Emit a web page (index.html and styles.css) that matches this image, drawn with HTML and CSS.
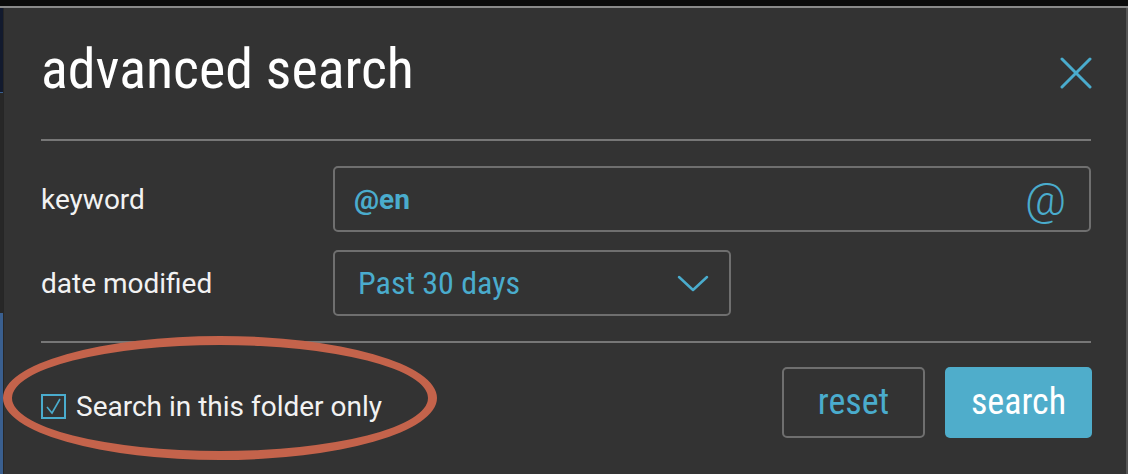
FILE: index.html
```html
<!DOCTYPE html>
<html lang="en">
<head>
  <meta charset="UTF-8">
  <title>advanced search</title>
  <link rel="stylesheet" href="styles.css">
</head>
<body>
  <div class="topbar"></div>
  <div class="frame">
    <div class="side">
      <div class="side-navy"></div>
      <div class="side-dark"></div>
      <div class="side-blue"></div>
    </div>
    <div class="dialog">
      <div class="header">
        <h1>advanced search</h1>
        <svg class="close" width="32" height="32" viewBox="0 0 32 32">
          <path d="M2 2 L30 30 M30 2 L2 30" stroke="#4aaccd" stroke-width="3" stroke-linecap="round"/>
        </svg>
      </div>
      <div class="rule"></div>
      <div class="form">
        <div class="row">
          <label class="label">keyword</label>
          <div class="field wide">
            <span class="value bold">@en</span>
            <span class="at">@</span>
          </div>
        </div>
        <div class="row">
          <label class="label">date modified</label>
          <div class="field select">
            <span class="value cond">Past 30 days</span>
            <svg class="chev" width="32" height="18" viewBox="0 0 32 18">
              <path d="M2 2 L16 15 L30 2" fill="none" stroke="#4aaccd" stroke-width="2.5" stroke-linecap="round" stroke-linejoin="round"/>
            </svg>
          </div>
        </div>
      </div>
      <div class="rule"></div>
      <div class="footer">
        <div class="check-wrap">
          <span class="box">
            <svg width="21" height="21" viewBox="0 0 21 21">
              <path d="M4 11 L9 17 L17 3" fill="none" stroke="#4aaccd" stroke-width="1.6"/>
            </svg>
          </span>
          <span class="check-label">Search in this folder only</span>
          <div class="ring"></div>
        </div>
        <div class="buttons">
          <button class="btn reset">reset</button>
          <button class="btn search">search</button>
        </div>
      </div>
    </div>
    <div class="edge"></div>
  </div>
</body>
</html>
```

FILE: styles.css
```css
html, body { margin: 0; height: 100%; }
body { background: #0b0b0b; font-family: Roboto, "Liberation Sans", sans-serif; color: #f2f2f2; overflow: hidden; }
.topbar { height: 6px; border-bottom: 2px solid #8a8a8a; background: #0b0b0b; }
.frame { display: flex; height: 466px; }
.side { width: 3px; display: flex; flex-direction: column; border-right: 1px solid #262626; }
.side-navy { height: 84px; background: #121a2e; border-bottom: 1px solid #3a5f8f; }
.side-dark { height: 220px; background: #272727; }
.side-blue { flex: 1; background: #3a5f8f; }
.edge { width: 2px; background: #555; }
.dialog { flex: 1; background: #333; padding: 0 35px 0 37px; }
.header { height: 131px; box-sizing: border-box; padding-top: 33px; display: flex; align-items: flex-start; justify-content: space-between; }
h1 { margin: 0; font-weight: 400; font-size: 56px; line-height: 1; font-stretch: 85%; color: #fff; }
.close { margin-right: -1px; margin-top: 16px; }
.rule { height: 2px; background: #777; }
.form { padding: 25px 0; display: flex; flex-direction: column; gap: 18px; }
.row { display: flex; align-items: center; }
.label { width: 292px; font-size: 28px; }
.field { height: 62px; border: 2px solid #6f6f6f; border-radius: 5px; display: flex; align-items: center; justify-content: space-between; box-sizing: content-box; }
.wide { flex: 1; padding: 0 23px 0 19px; }
.select { width: 351px; padding: 0 20px 0 23px; }
.value { color: #4aaccd; font-size: 28px; }
.bold { font-weight: 700; }
.cond { font-size: 32px; font-stretch: 85%; }
.at { color: #4aaccd; font-size: 45px; font-weight: 300; line-height: 1; }
.chev { margin-top: 2px; }
.footer { display: flex; justify-content: space-between; align-items: center; padding-top: 24px; }
.check-wrap { position: relative; display: flex; align-items: center; gap: 10px; padding-top: 8px; }
.box { width: 21px; height: 21px; border: 2px solid #4aaccd; display: flex; }
.check-label { font-size: 28px; }
.ring { position: absolute; left: -38px; top: -46px; width: 416px; height: 106px; border: 9px solid #c4634b; border-radius: 50%; }
.buttons { display: flex; gap: 20px; margin-right: -1px; }
.btn { height: 71px; border-radius: 5px; font-family: Roboto, "Liberation Sans", sans-serif; font-size: 36px; font-stretch: 85%; padding: 0 0 2px; }
.reset { width: 143px; background: transparent; border: 2px solid #6f6f6f; color: #4aaccd; }
.search { width: 147px; background: #4fadcb; border: none; color: #fff; }
```
